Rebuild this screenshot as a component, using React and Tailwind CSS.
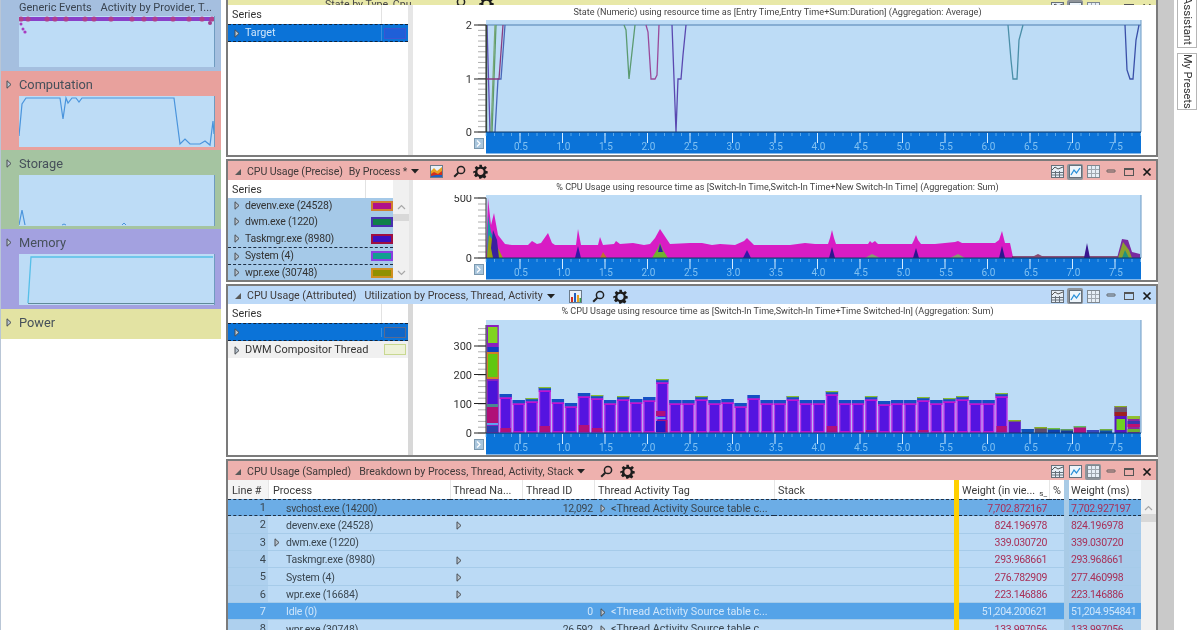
import React from "react";

const Tri = ({ className = "" }) => (
  <svg width="6" height="9" viewBox="0 0 6 9" className={"shrink-0 " + className}>
    <path d="M1 .8 L5 4.5 L1 8.2 Z" fill="#b8c4cf" stroke="#4a4f55" strokeWidth="1" />
  </svg>
);

const Collapse = () => (
  <svg width="8" height="8" viewBox="0 0 8 8" className="shrink-0">
    <path d="M7 1 V7 H1 Z" fill="#5a5a5a" />
  </svg>
);

const Caret = () => (
  <svg width="8" height="5" viewBox="0 0 8 5" className="shrink-0">
    <path d="M0 0 H8 L4 4.5 Z" fill="#222" />
  </svg>
);

const Magnifier = () => (
  <svg width="13" height="13" viewBox="0 0 13 13" className="shrink-0">
    <circle cx="8" cy="5" r="3.6" fill="none" stroke="#222" strokeWidth="1.5" />
    <path d="M5.3 7.7 L1.2 11.8" stroke="#222" strokeWidth="2" />
  </svg>
);

const Gear = () => (
  <svg width="15" height="15" viewBox="0 0 24 24" className="shrink-0">
    <path
      fill="#1c1c1c"
      fillRule="evenodd"
      d="M10 1h4l.7 3.2 2 .8 2.8-1.8 2.8 2.8L19.5 8.8l.8 2L23.5 11.500v3.500l-3.200.7-.8 2 1.800 2.800-2.800 2.800-2.800-1.800-2 .8L13 23.500h-3l-.7-3.200-2-.8-2.800 1.800-2.800-2.800 1.800-2.800-.8-2L.5 15v-3.500l3.200-.7.8-2L2.700 6l2.800-2.800 2.800 1.800 2-.8zM12 7.500a5 5 0 1 0 0 10a5 5 0 0 0 0-10z"
    />
  </svg>
);

const ChartGlyph = () => (
  <svg width="13" height="13" viewBox="0 0 13 13" className="shrink-0">
    <rect x=".5" y=".5" width="12" height="12" fill="#e8f0f8" stroke="#6a7a8a" />
    <path d="M1 12 V6 L4 3 L7 6 L12 2 V12 Z" fill="#e8a020" />
    <path d="M1 12 V9 L4 7 L8 9 L12 6 V12 Z" fill="#d03020" />
    <path d="M1 12 V11 L6 10 L12 10 V12 Z" fill="#2060c0" />
  </svg>
);

const BarGlyph = () => (
  <svg width="13" height="13" viewBox="0 0 13 13" className="shrink-0">
    <rect x=".5" y=".5" width="12" height="12" fill="#e8f0f8" stroke="#6a7a8a" />
    <rect x="2" y="7" width="2" height="5" fill="#d03020" />
    <rect x="5" y="3" width="2" height="9" fill="#2060c0" />
    <rect x="8" y="5" width="2" height="7" fill="#e8a020" />
    <rect x="10.500" y="8" width="1.500" height="4" fill="#30a040" />
  </svg>
);

const WinIcon = ({ kind, active }) => (
  <span
    className={
      "flex h-[16px] w-[16px] items-center justify-center rounded-[2px] " +
      (active ? "bg-[#8f949a]" : "")
    }
  >
    {kind === "tablechart" && (
      <svg width="13" height="13" viewBox="0 0 13 13">
        <rect x=".5" y=".5" width="12" height="12" fill="#e6eef6" stroke="#66707a" />
        <path d="M1 5 L4 2 L7 4 L12 2" fill="none" stroke="#555" />
        <path d="M1 7.500 H12 M1 10 H12 M4.500 6 V12 M8.500 6 V12" stroke="#66707a" />
      </svg>
    )}
    {kind === "line" && (
      <svg width="13" height="13" viewBox="0 0 13 13">
        <rect x=".5" y=".5" width="12" height="12" fill="#eef5fb" stroke="#66707a" />
        <path d="M2 10 L5 5 L7.500 8 L11 3" fill="none" stroke="#2a90d8" strokeWidth="1.300" />
      </svg>
    )}
    {kind === "grid" && (
      <svg width="13" height="13" viewBox="0 0 13 13">
        <rect x=".5" y=".5" width="12" height="12" fill="#e6eef6" stroke="#7f8890" />
        <path d="M1 4.500 H12 M1 8.500 H12 M4.500 1 V12 M8.500 1 V12" stroke="#a0a8b0" />
      </svg>
    )}
  </span>
);

const WinControls = ({ active }) => (
  <div className="ml-auto mr-[1px] flex items-center gap-[2px]">
    <WinIcon kind="tablechart" active={active === 0} />
    <WinIcon kind="line" active={active === 1} />
    <WinIcon kind="grid" active={active === 2} />
    <svg width="16" height="16" viewBox="0 0 16 16">
      <rect x="4" y="6" width="8" height="2" rx=".5" fill="none" stroke="#555" />
    </svg>
    <svg width="16" height="16" viewBox="0 0 16 16">
      <rect x="3.500" y="4.500" width="9" height="7" fill="none" stroke="#555" />
      <path d="M3.500 5.500 H12.500" stroke="#555" />
    </svg>
    <svg width="16" height="16" viewBox="0 0 16 16">
      <path d="M4.500 4.500 L11.500 11.500 M11.500 4.500 L4.500 11.500" stroke="#1a1a1a" strokeWidth="1.700" />
    </svg>
  </div>
);

const Swatch = ({ border, fill }) => (
  <span
    className="block h-[10px] w-[22px] border-2"
    style={{ borderColor: border, backgroundColor: fill }}
  />
);

/* ---------- charts: coordinates are the picture's own, through the viewBox ---------- */

const MAJOR = Array.from({ length: 15 }, (_, i) => i);
const MINOR = Array.from({ length: 78 }, (_, i) => i);

const Axis = ({ top }) => (
  <g>
    <rect x="486" y={top} width="655" height="21.500" fill="#0b73d8" />
    <path d={`M486 ${top} H1141`} stroke="#123a66" strokeWidth="1" />
    {MINOR.map((i) => {
      const x = 486 + 8.5 * i;
      return (
        <path key={i} d={`M${x} ${top + 1} v3`} stroke="#6db6f0" strokeWidth=".8" opacity={x > 1141 ? 0 : 1} />
      );
    })}
    {MAJOR.map((i) => {
      const x = 520 + 42.5 * i;
      return (
        <g key={i}>
          <path d={`M${x} ${top + 1} v10`} stroke="#d4ecff" strokeWidth="1" />
          <text x={x + 1} y={top + 18} textAnchor="middle" fontSize="10" fill="#7fc0f2">
            {(0.5 * (i + 1)).toFixed(1)}
          </text>
        </g>
      );
    })}
    <rect x="474.500" y={top + 6.500} width="9" height="10" fill="#a9c6dd" stroke="#7b98ae" />
    <path d={`M477 ${top + 8.500} l3 3 l-3 3`} fill="none" stroke="#fff" strokeWidth="1.200" />
  </g>
);

const YTicks = ({ top, bottom, step, majors }) => {
  const n = Math.floor((bottom - top) / step);
  return (
    <g>
      {Array.from({ length: n + 1 }, (_, i) => (
        <path key={i} d={`M478 ${bottom - i * step} H486`} stroke="#9a9a9a" strokeWidth=".8" />
      ))}
      {majors.map(([label, y]) => (
        <g key={label}>
          <path d={`M474 ${y} H486`} stroke="#222" strokeWidth="1" />
          <text x="472" y={y + 4} textAnchor="end" fontSize="11" fill="#333">
            {label}
          </text>
        </g>
      ))}
      <path d={`M486 ${top} V${bottom}`} stroke="#333" strokeWidth="1" />
    </g>
  );
};

const LINES = [
  ["M496 25 L492 132", "#5a9a6a"],
  ["M487 25 L490 132", "#5d4bb8"],
  ["M486.500 132 V25", "#3d5d45"],
  ["M491 132 L495 25", "#7aa878"],
  ["M495 132 L498 79 H501 L505 25", "#4a68b8"],
  ["M486 79 H499 L503 25", "#8a3d80"],
  ["M624 25 L626 30 L629 79 L635 25", "#5b9a70"],
  ["M646 25 L648 32 L651 79 H655 L657 75 L659 25", "#9a4a9a"],
  ["M672 25 L676 132 L678 79 H681 L683 55 L686 25", "#5a48b0"],
  ["M1008 25 L1011 60 L1013 79 H1017 L1019 40 L1023 25", "#4b8fa8"],
  ["M1125 25 L1127 70 L1130 79 H1133 L1136 40 L1139 25", "#3a50a8"],
];

const StateChart = () => (
  <svg width="743" height="135" viewBox="413 20 743 135" className="block">
    <rect x="486" y="20" width="655" height="112" fill="#bddcf6" />
    <path d="M1141 20 V132" stroke="#6d9ac4" strokeWidth="1" />
    <path d="M486 25 H1141" stroke="#4f7fb0" strokeWidth="1.200" />
    {LINES.map(([d, c], i) => (
      <path key={i} d={d} fill="none" stroke={c} strokeWidth="1.300" />
    ))}
    <YTicks top={25} bottom={132} step={5.35} majors={[["2", 25], ["1", 79], ["0", 132]]} />
    <Axis top={132} />
  </svg>
);

const AREA =
  "486,258 488,198 491,225 494,213 498,235 505,244 512,245 528,245 532,241 537,244 541,243 548,233 552,243 555,245 576,245 578,229 581,245 598,245 600,237 603,245 614,244 616,241 620,244 633,243 644,245 650,244 655,238 660,229 664,235 670,244 690,243 702,243 712,245 720,244 735,245 744,241 747,238 750,241 754,245 790,245 805,243 815,244 828,244 830,238 832,230 834,238 836,244 868,244 870,241 872,243 875,241 878,244 912,244 914,240 916,235 918,240 921,244 935,244 945,243 955,242 958,241 962,243 985,243 995,243 999,240 1002,231 1005,243 1010,243 1013,257 1016,258 486,258";

const PreciseChart = () => (
  <svg width="743" height="85" viewBox="413 195 743 85" className="block">
    <rect x="486" y="195" width="655" height="63" fill="#bddcf6" />
    <path d="M1141 195 V258" stroke="#6d9ac4" strokeWidth="1" />
    <polygon points={AREA} fill="#d81cc4" />
    <polygon points="487,258 488,215 491,232 495,240 500,258" fill="#1898a8" />
    <polygon points="487,258 489,235 494,242 499,250 503,258" fill="#9aa010" />
    <polygon points="491,248 493,230 497,240 499,258 493,258" fill="#3a20a0" />
    <polygon points="575,258 578,246 581,258" fill="#3418a8" />
    <polygon points="600,258 603,252 607,258" fill="#c07030" />
    <polygon points="652,258 658,248 660,243 663,250 668,258" fill="#70b030" />
    <polygon points="658,252 660,244 663,252" fill="#2a1fa0" />
    <polygon points="743,258 747,250 751,258" fill="#3418a8" />
    <polygon points="829,258 832,247 835,258" fill="#2e1590" />
    <polygon points="913,258 916,248 919,258" fill="#2e1590" />
    <polygon points="999,258 1002,246 1005,258" fill="#2e1590" />
    <polygon points="865,258 872,254 880,258" fill="#8a9a70" />
    <polygon points="950,258 958,254 965,258" fill="#8a9a70" />
    <path d="M1012 257 H1118" stroke="#7a2050" strokeWidth="1.300" />
    <polygon points="1032,257 1038,254 1044,257" fill="#8a4a70" />
    <polygon points="1084,258 1087,243 1090,258" fill="#3a1590" />
    <polygon points="1117,258 1122,239 1128,240 1132,252 1140,254 1140,258" fill="#7a2aa0" />
    <polygon points="1118,258 1123,242 1129,250 1132,258" fill="#8aa030" />
    <polygon points="1122,258 1125,250 1129,258" fill="#209080" />
    <YTicks top={198} bottom={258} step={6} majors={[["500", 198], ["0", 258]]} />
    <Axis top={258} />
  </svg>
);

const HEIGHTS = [
  107, 39, 33, 35, 46, 34, 30, 40, 38, 33, 37, 34, 36, 54, 33, 33, 37, 33, 34, 30, 38, 33, 33, 37, 33, 33,
  42, 33, 33, 37, 32, 33, 33, 36, 33, 35, 37, 33, 33, 40,
];
const CRIMSON = { 1: 4, 4: 6, 7: 7, 8: 4, 26: 6, 39: 6, 29: 2, 33: 2, 13: 12 };
const GREEN_TOP = [3, 4, 8, 10, 13, 16, 23, 26, 29, 33, 35, 36, 39];
const SMALL = [
  [40, 13, "#5b14c8", "#8ab020"],
  [41, 4, "#1050b8", "#1050b8"],
  [42, 6, "#5a4a70", "#8ab020"],
  [43, 5, "#1040b0", "#70c040"],
  [44, 4, "#183a98", "#60a060"],
  [45, 7, "#b01080", "#60c060"],
  [46, 3, "#3848c0", "#3848c0"],
  [47, 4, "#1050a8", "#70b040"],
];

const Bars = () => (
  <g>
    {HEIGHTS.map((h, i) => {
      if (i === 0) return null;
      const x = 486.500 + 13.05 * i;
      const y = 433 - h;
      const c = CRIMSON[i] || 0;
      return (
        <g key={i}>
          <rect x={x} y={y} width="12.300" height={h} fill="#bd3ee6" />
          <rect x={x + 1.500} y={y + 5} width="9.300" height={h - 7} fill="#5514e0" />
          <rect x={x} y={y} width="12.300" height="3.500" fill="#1450c4" />
          <rect x={x} y={y + 3.500} width="12.300" height="1.500" fill="#c010d0" />
          <rect x={x + 1} y={431} width="10.300" height="1.500" fill="#c010d0" />
          {GREEN_TOP.includes(i) && <rect x={x} y={y} width="12.300" height="1.200" fill="#8abf30" />}
          {c > 0 && <rect x={x + 1} y={433 - c - 1} width="10.300" height={c} fill="#b0107c" />}
        </g>
      );
    })}
    {/* the tall first bar */}
    <g>
      <rect x="486.500" y="325" width="12.300" height="108" fill="#8a20c0" />
      <rect x="488" y="327" width="9.500" height="16" fill="#80d420" />
      <rect x="487.500" y="347" width="11" height="5" fill="#1040c0" />
      <rect x="486.500" y="352" width="12.300" height="27" fill="#d08028" />
      <rect x="488" y="354" width="9.500" height="23" fill="#60c810" />
      <rect x="488" y="381" width="9.500" height="23" fill="#4a14d8" />
      <rect x="487" y="404" width="11" height="3" fill="#4a8a90" />
      <rect x="487" y="407" width="11" height="16" fill="#b01078" />
      <rect x="487" y="423" width="11" height="2" fill="#60a0f0" />
      <rect x="487" y="426" width="11" height="6" fill="#2840b0" />
    </g>
    {/* complicated stack on the peak at 2.1s */}
    <rect x="656" y="411" width="9.500" height="5" fill="#b0107c" />
    <rect x="656" y="421" width="9.500" height="11" fill="#2818c8" />
    <rect x="656" y="417" width="9.500" height="2" fill="#60a0f0" />
    {SMALL.map(([i, h, c, top]) => {
      const x = 486.500 + 13.05 * i;
      return (
        <g key={i}>
          <rect x={x} y={433 - h} width="12.300" height={h} fill={c} />
          <rect x={x} y={433 - h} width="12.300" height="1.500" fill={top} />
        </g>
      );
    })}
    {/* last two, taller and striped */}
    <g>
      <rect x="1114.500" y="406" width="12.300" height="27" fill="#5a14c0" />
      <rect x="1114.500" y="406" width="12.300" height="1.500" fill="#8ab020" />
      <rect x="1114.500" y="408" width="12.300" height="4" fill="#6a5a70" />
      <rect x="1114.500" y="412" width="12.300" height="4" fill="#a02020" />
      <rect x="1116.500" y="419" width="8.500" height="11" fill="#70d020" />
      <rect x="1127.500" y="416" width="12.300" height="17" fill="#8a2aa0" />
      <rect x="1127.500" y="416" width="12.300" height="3" fill="#90c030" />
      <rect x="1127.500" y="421" width="12.300" height="3" fill="#3838b0" />
      <rect x="1127.500" y="424" width="12.300" height="3" fill="#c01070" />
      <rect x="1127.500" y="429" width="12.300" height="3" fill="#70b030" />
    </g>
  </g>
);

const AttributedChart = () => (
  <svg width="743" height="135" viewBox="413 320 743 135" className="block">
    <rect x="486" y="320" width="655" height="113" fill="#bddcf6" />
    <path d="M1141 320 V433" stroke="#6d9ac4" strokeWidth="1" />
    <Bars />
    <YTicks
      top={325}
      bottom={433}
      step={5.8}
      majors={[["300", 346], ["200", 374.500], ["100", 403.500], ["0", 433]]}
    />
    <Axis top={433} />
  </svg>
);

/* ---------- sidebar ---------- */

const DOTS = [2, 9, 28, 36, 47, 66, 75, 92, 113, 125, 136, 154, 170, 183, 193];
const Mini = ({ children }) => (
  <div className="ml-[18px] h-[51px] w-[196px] bg-[#bddcf6]">
    <svg width="196" height="51" viewBox="0 0 196 51" className="block">
      {children}
      <path d="M195.500 0 V51" stroke="#6f9bc0" strokeWidth="1" />
    </svg>
  </div>
);

const Group = ({ title, bg, h, children }) => (
  <div className={"flex flex-col " + bg + " " + h}>
    <div className="flex h-[25px] items-center pt-[2px]">
      <Tri className="ml-[5px] mr-[7px]" />
      <span className="text-[12.8px] text-[#46505a]">{title}</span>
    </div>
    {children}
  </div>
);

const Sidebar = () => (
  <div className="flex h-full w-[221px] shrink-0 flex-col border-l border-l-[#b9c6d6] bg-white">
    <div className="h-[71px] bg-[#a5bfdf] pt-[1px]">
      <div className="ml-[18px] flex h-[15px] items-center justify-between whitespace-nowrap pr-[9px] text-[11px] text-[#3a4450]">
        <span>Generic Events</span>
        <span>Activity by Provider, T...</span>
      </div>
      <div className="h-[51px]">
        <Mini>
          <path d="M0 3 H196" stroke="#8a40c8" strokeWidth="4" />
          {DOTS.map((x) => (
            <circle key={x} cx={x} cy="3" r="2.600" fill="#b0408c" />
          ))}
          <circle cx="2" cy="8" r="1.500" fill="#a83cc0" />
          <circle cx="4" cy="13" r="1.500" fill="#a83cc0" />
          <circle cx="6" cy="16" r="1.600" fill="#a83cc0" />
          <circle cx="191" cy="7" r="2" fill="#a03c90" />
        </Mini>
      </div>
    </div>
    <Group title="Computation" bg="bg-[#e8a19d]" h="h-[79px]">
      <Mini>
        <path
          d="M0 40 L3 8 L7 2 H41 L44 23 L47 2 L49 7 L53 2 L57 2 L60 6 L63 2 H155 L161 48 L166 43 L171 48 L181 48 L186 45 L191 49 L194 25 L195 38"
          fill="none"
          stroke="#4a94dc"
          strokeWidth="1.200"
        />
      </Mini>
    </Group>
    <Group title="Storage" bg="bg-[#a5c4a1]" h="h-[79px]">
      <Mini>
        <path d="M0 50 L3 35 L6 50" fill="none" stroke="#4a94dc" strokeWidth="1.200" />
        <path d="M43 50 l2 -1 l2 1 M103 50 l2 -2 l2 2" fill="none" stroke="#4a94dc" />
      </Mini>
    </Group>
    <Group title="Memory" bg="bg-[#a3a1e0]" h="h-[80px]">
      <Mini>
        <path d="M9 49 L12 3 H194" fill="none" stroke="#56bfe8" strokeWidth="1.300" />
        <path d="M9 49.500 H195" stroke="#5f8a99" strokeWidth="1" />
      </Mini>
    </Group>
    <Group title="Power" bg="bg-[#e3e3a3]" h="h-[30px]" />
  </div>
);

/* ---------- panels ---------- */

const SeriesHead = ({ w1, w2, h = "h-[19px]" }) => (
  <div className={"flex items-stretch bg-white text-[10.8px] text-[#333] " + h}>
    <div className="flex items-center border-r border-r-[#e2e2e2] pl-[4px] pt-[2px]" style={{ width: w1 }}>
      Series
    </div>
    <div style={{ width: w2 }} />
  </div>
);

const PanelHeader = ({ bg, h = "h-[19px]", children, active }) => (
  <div className={"flex items-center whitespace-nowrap pl-[6px] pt-[2px] text-[10.6px] text-[#3f3a3a] " + bg + " " + h}>
    {children}
    <WinControls active={active} />
  </div>
);

const PRECISE_ROWS = [
  ["devenv.exe (24528)", "#d08030", "#b0108a", "h-[15px]"],
  ["dwm.exe (1220)", "#4a30b0", "#10804a", "h-[17px]"],
  ["Taskmgr.exe (8980)", "#a01040", "#3a10c0", "h-[17px]"],
  ["System (4)", "#8a40e0", "#10a090", "h-[18px] border-y border-dashed border-y-[#1d2f45]"],
  ["wpr.exe (30748)", "#d09020", "#909000", "h-[15px]"],
];

const Chevron = ({ up }) => (
  <svg width="9" height="6" viewBox="0 0 9 6">
    <path d={up ? "M1 5 L4.500 1.500 L8 5" : "M1 1 L4.500 4.500 L8 1"} fill="none" stroke="#a8a8a8" strokeWidth="1.200" />
  </svg>
);

const Panel1 = () => (
  <section className="h-[157px] shrink-0 border-2 border-t-0 border-[#7b7b7b]">
    <div className="flex h-[5px] items-end overflow-hidden whitespace-nowrap bg-[#e8e8a8] pl-[97px] text-[10.6px] leading-[8px] text-[#444]">
      <span className="mb-[-4px]">State by Type, Cpu</span>
      <span className="ml-[42px] mb-[-6px] flex items-center gap-[13px]">
        <Magnifier />
        <Gear />
      </span>
      <span className="ml-auto mb-[-11px] flex">
        <WinControls active={1} />
      </span>
    </div>
    <div className="flex h-[150px] bg-white">
      <div className="w-[180px] shrink-0">
        <SeriesHead w1={154} w2={26} />
        <div className="flex h-[18px] items-center border-y border-dashed border-y-[#10253f] bg-[#0b73d8] text-[10.8px] text-[#cfe6fb]">
          <div className="flex w-[154px] items-center border-r border-r-[#3b8fe0]">
            <Tri className="ml-[6px] mr-[5px]" />
            <span>Target</span>
          </div>
          <div className="flex w-[26px] justify-center">
            <span className="block h-[11px] w-[22px] border border-[#3c55d0] bg-[#1f5fd8]" />
          </div>
        </div>
      </div>
      <div className="w-[5px] shrink-0 bg-[#e6e6e6]" />
      <div className="min-w-0 flex-1">
        <div className="flex h-[15px] items-center justify-center whitespace-nowrap pr-[14px] text-[9.1px] text-[#444]">
          State (Numeric) using resource time as [Entry Time,Entry Time+Sum:Duration] (Aggregation: Average)
        </div>
        <StateChart />
      </div>
    </div>
  </section>
);

const Panel2 = () => (
  <section className="mt-[2px] h-[123px] shrink-0 border-2 border-[#7b7b7b]">
    <PanelHeader bg="bg-[#eeb1ae]" active={1}>
      <Collapse />
      <span className="ml-[5px] tracking-[-0.1px]">CPU Usage (Precise)</span>
      <span className="ml-[6px] tracking-[-0.1px]">By Process *</span>
      <span className="ml-[4px]"><Caret /></span>
      <span className="ml-[11px]"><ChartGlyph /></span>
      <span className="ml-[10px]"><Magnifier /></span>
      <span className="ml-[7px]"><Gear /></span>
    </PanelHeader>
    <div className="flex h-[100px] bg-white">
      <div className="flex w-[181px] shrink-0">
        <div className="w-[165px] shrink-0">
          <SeriesHead w1={138} w2={27} h="h-[18px]" />
          {PRECISE_ROWS.map(([name, border, fill, cls]) => (
            <div
              key={name}
              className={"flex items-center overflow-hidden bg-[#a5c9e8] text-[10.5px] tracking-[-0.2px] text-[#333] " + cls}
            >
              <Tri className="ml-[6px] mr-[5px]" />
              <span className="w-[124px] truncate">{name}</span>
              <span className="ml-[12px]">
                <Swatch border={border} fill={fill} />
              </span>
            </div>
          ))}
        </div>
        <div className="flex flex-1 flex-col items-center bg-[#f0f0f0]">
          <div className="mt-[24px]"><Chevron up /></div>
          <div className="mt-[4px] h-[7px] w-full bg-[#d8d8d8]" />
          <div className="mt-auto mb-[4px]"><Chevron /></div>
        </div>
      </div>
      <div className="w-[4px] shrink-0 bg-[#e6e6e6]" />
      <div className="min-w-0 flex-1">
        <div className="flex h-[15px] items-center justify-center whitespace-nowrap pr-[14px] text-[9.1px] text-[#444]">
          % CPU Usage using resource time as [Switch-In Time,Switch-In Time+New Switch-In Time] (Aggregation: Sum)
        </div>
        <PreciseChart />
      </div>
    </div>
  </section>
);

const Panel3 = () => (
  <section className="mt-[2px] h-[173px] shrink-0 border-2 border-[#7b7b7b]">
    <PanelHeader bg="bg-[#bcd9f8]" h="h-[18px]" active={1}>
      <Collapse />
      <span className="ml-[5px]">CPU Usage (Attributed)</span>
      <span className="ml-[8px]">Utilization by Process, Thread, Activity</span>
      <span className="ml-[4px]"><Caret /></span>
      <span className="ml-[14px]"><BarGlyph /></span>
      <span className="ml-[10px]"><Magnifier /></span>
      <span className="ml-[8px]"><Gear /></span>
    </PanelHeader>
    <div className="flex h-[151px] bg-white">
      <div className="w-[180px] shrink-0">
        <SeriesHead w1={154} w2={26} />
        <div className="flex h-[18px] items-center border-y border-dashed border-y-[#10253f] bg-[#0b73d8]">
          <div className="flex w-[154px] items-center border-r border-r-[#3b8fe0]">
            <Tri className="ml-[6px]" />
          </div>
          <div className="flex w-[26px] justify-center">
            <span className="block h-[11px] w-[22px] border border-[#5a6a90] bg-[#1067c8]" />
          </div>
        </div>
        <div className="flex h-[17px] items-center whitespace-nowrap bg-[#f0f0f0] text-[11px] text-[#333]">
          <div className="flex w-[154px] items-center pt-[2px]">
            <Tri className="ml-[6px] mr-[5px]" />
            <span>DWM Compositor Thread</span>
          </div>
          <div className="flex w-[26px] justify-center">
            <span className="block h-[11px] w-[22px] border border-[#c8d890] bg-[#eef2d8]" />
          </div>
        </div>
      </div>
      <div className="w-[5px] shrink-0 bg-[#d8d8d8]" />
      <div className="min-w-0 flex-1">
        <div className="flex h-[16px] items-center justify-center whitespace-nowrap pr-[14px] text-[9.1px] text-[#444]">
          % CPU Usage using resource time as [Switch-In Time,Switch-In Time+Time Switched-In] (Aggregation: Sum)
        </div>
        <AttributedChart />
      </div>
    </div>
  </section>
);

const COLS =
  "grid grid-cols-[40px_182px_72px_72px_180px_180px_5px_90px_15px_5px_72px_15px]";

const TAG = "<Thread Activity Source table c...";
const ROWS = [
  { n: 1, name: "svchost.exe (14200)", id: "12,092", tag: TAG, w: "7,702.872167", ms: "7,702.927197", kind: "focus" },
  { n: 2, name: "devenv.exe (24528)", thread: true, w: "824.196978", ms: "824.196978" },
  { n: 3, name: "dwm.exe (1220)", open: true, w: "339.030720", ms: "339.030720" },
  { n: 4, name: "Taskmgr.exe (8980)", thread: true, w: "293.968661", ms: "293.968661" },
  { n: 5, name: "System (4)", thread: true, w: "276.782909", ms: "277.460998" },
  { n: 6, name: "wpr.exe (16684)", thread: true, w: "223.146886", ms: "223.146886" },
  { n: 7, name: "Idle (0)", id: "0", tag: TAG, w: "51,204.200621", ms: "51,204.954841", kind: "sel" },
  { n: 8, name: "wpr.exe (30748)", id: "26,592", tag: TAG, w: "133.997056", ms: "133.997056" },
];

const Row = ({ r }) => {
  const sel = r.kind === "sel";
  const focus = r.kind === "focus";
  const bg = sel ? "bg-[#55a3e8]" : focus ? "bg-[#6cade6]" : "bg-[#bbdaf5]";
  const msBg = sel ? "bg-[#55a3e8]" : focus ? "bg-[#6cade6]" : "bg-[#a9cceb]";
  const txt = sel ? "text-[#cfe6fb]" : "text-[#3a4650]";
  const num = sel
    ? "text-[#cfe6fb] text-[10.5px] tracking-[-0.35px]"
    : "text-[#a83058] text-[10.5px] tracking-[-0.35px]";
  const edge = focus
    ? "border-y border-dashed border-y-[#1d2f45]"
    : "border-b border-b-[#a6cbe9]";
  const cell = "flex items-center overflow-hidden whitespace-nowrap pt-[2px] " + edge;
  return (
    <div className={COLS + " h-[17.330px] text-[11px] " + txt}>
      <div className={cell + " justify-end pr-[2px] " + (sel || focus ? bg : "bg-[#aed0ee]")}>{r.n}</div>
      <div className={cell + " text-[10.5px] tracking-[-0.2px] " + bg}>
        <span className="flex w-[18px] justify-center">{r.open && <Tri />}</span>
        {r.name}
      </div>
      <div className={cell + " pl-[6px] " + bg}>{r.thread && <Tri />}</div>
      <div className={cell + " justify-end pr-[1px] text-[10.5px] tracking-[-0.2px] " + bg}>{r.id}</div>
      <div className={cell + " text-[10.8px] " + bg}>
        {r.tag && <Tri className="ml-[6px] mr-[5px]" />}
        {r.tag}
      </div>
      <div className={cell + " " + bg} />
      <div className="bg-[#ffd000]" />
      <div className={cell + " justify-end pr-[2px] " + bg + " " + num}>{r.w}</div>
      <div className={cell + " " + bg} />
      <div className="bg-[#a9cbe6]" />
      <div className={cell + " pl-[2px] " + msBg + " " + num}>{r.ms}</div>
      <div className="bg-[#f0f0f0]" />
    </div>
  );
};

const Panel4 = () => (
  <section className="mt-[2px] h-[190px] shrink-0 border-2 border-[#7b7b7b]">
    <PanelHeader bg="bg-[#eeb1ae]" active={2}>
      <Collapse />
      <span className="ml-[5px]">CPU Usage (Sampled)</span>
      <span className="ml-[8px]">Breakdown by Process, Thread, Activity, Stack</span>
      <span className="ml-[3px]"><Caret /></span>
      <span className="ml-[15px]"><Magnifier /></span>
      <span className="ml-[7px]"><Gear /></span>
    </PanelHeader>
    <div className={COLS + " h-[19px] whitespace-nowrap bg-white text-[10.8px] text-[#3a3a3a]"}>
      <div className="flex items-center bg-[#f4f4f4] pl-[4px] pt-[2px]">Line #</div>
      <div className="flex items-center border-l border-l-[#e6e6e6] pl-[4px] pt-[2px]">Process</div>
      <div className="flex items-center border-l border-l-[#e6e6e6] pl-[2px] pt-[2px]">Thread Na...</div>
      <div className="flex items-center border-l border-l-[#e6e6e6] pl-[3px] pt-[2px]">Thread ID</div>
      <div className="flex items-center border-l border-l-[#e6e6e6] pl-[3px] pt-[2px]">Thread Activity Tag</div>
      <div className="flex items-center border-l border-l-[#e6e6e6] pl-[3px] pt-[2px]">Stack</div>
      <div className="bg-[#ffd000]" />
      <div className="flex items-center justify-between pl-[3px] pr-[2px] pt-[2px]">
        <span>Weight (in vie...</span>
        <span className="mt-[6px] text-[8px]">s_</span>
      </div>
      <div className="flex items-center overflow-hidden border-l border-l-[#e6e6e6] pl-[3px] pt-[2px]">%</div>
      <div className="bg-[#a9cbe6]" />
      <div className="flex items-center pl-[2px] pt-[2px]">Weight (ms)</div>
      <div className="bg-[#f0f0f0]" />
    </div>
    <div className="relative">
      {ROWS.map((r) => (
        <Row key={r.n} r={r} />
      ))}
      <div className="absolute right-0 top-0 flex w-[15px] flex-col items-center">
        <div className="mt-[6px]"><Chevron up /></div>
        <div className="mt-[3px] h-[8px] w-full bg-[#d8d8d8]" />
      </div>
    </div>
  </section>
);

export default function App() {
  return (
    <div className="flex h-[630px] w-[1200px] overflow-hidden bg-white font-['Roboto',sans-serif] blur-[0.5px]">
      <Sidebar />
      <main className="ml-[5px] flex w-[932px] shrink-0 flex-col">
        <Panel1 />
        <Panel2 />
        <Panel3 />
        <Panel4 />
      </main>
      <div className="w-[16px] shrink-0 bg-[#c9c9c9]" />
      <div className="flex flex-1 flex-col items-center gap-[5px]">
        <div className="flex h-[48px] w-[20px] flex-col justify-end overflow-hidden border border-t-0 border-[#b5b5b5] bg-white pb-[2px] text-[11.5px] text-[#333]">
          <span className="self-center whitespace-nowrap [writing-mode:vertical-rl]">Analysis Assistant</span>
        </div>
        <div className="flex h-[57px] w-[20px] items-center justify-center overflow-hidden border border-[#b5b5b5] bg-white text-[11px] text-[#333]">
          <span className="whitespace-nowrap [writing-mode:vertical-rl]">My Presets</span>
        </div>
      </div>
    </div>
  );
}
